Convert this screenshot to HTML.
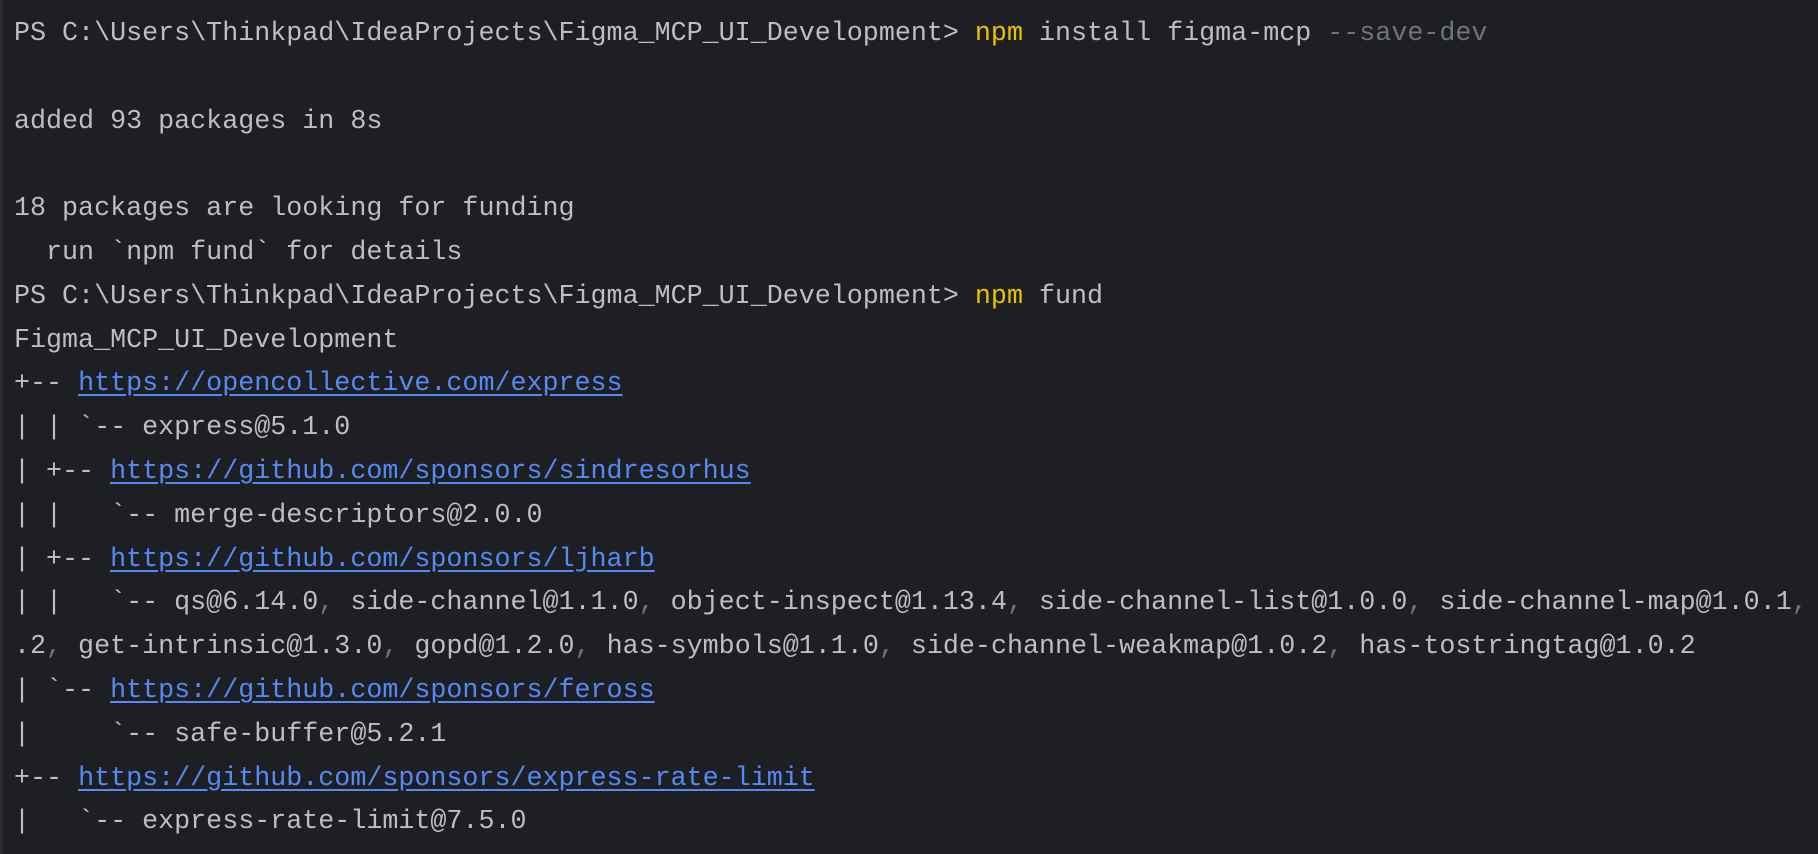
<!DOCTYPE html>
<html><head><meta charset="utf-8"><style>
html,body{margin:0;padding:0;background:#1e1f22;width:1818px;height:854px;overflow:hidden}
body{border-left:3px solid #2b2d30;box-sizing:border-box}
pre{margin:0;padding:13px 0 0 11px;font-family:"Liberation Mono",monospace;font-size:26.7px;line-height:43.8px;color:#bcbec4;white-space:pre;letter-spacing:0}
.y{color:#e8c200}.g{color:#6f737a}.l{color:#548af7;text-decoration:underline;text-underline-offset:4px}
</style></head><body><pre>PS C:\Users\Thinkpad\IdeaProjects\Figma_MCP_UI_Development&gt; <span class="y">npm</span> install figma-mcp <span class="g">--save-dev</span>

added 93 packages in 8s

18 packages are looking for funding
  run `npm fund` for details
PS C:\Users\Thinkpad\IdeaProjects\Figma_MCP_UI_Development&gt; <span class="y">npm</span> fund
Figma_MCP_UI_Development
+-- <span class="l">https://opencollective.com/express</span>
| | `-- express@5.1.0
| +-- <span class="l">https://github.com/sponsors/sindresorhus</span>
| |   `-- merge-descriptors@2.0.0
| +-- <span class="l">https://github.com/sponsors/ljharb</span>
| |   `-- qs@6.14.0<span class="g">,</span> side-channel@1.1.0<span class="g">,</span> object-inspect@1.13.4<span class="g">,</span> side-channel-list@1.0.0<span class="g">,</span> side-channel-map@1.0.1<span class="g">,</span>
.2<span class="g">,</span> get-intrinsic@1.3.0<span class="g">,</span> gopd@1.2.0<span class="g">,</span> has-symbols@1.1.0<span class="g">,</span> side-channel-weakmap@1.0.2<span class="g">,</span> has-tostringtag@1.0.2
| `-- <span class="l">https://github.com/sponsors/feross</span>
|     `-- safe-buffer@5.2.1
+-- <span class="l">https://github.com/sponsors/express-rate-limit</span>
|   `-- express-rate-limit@7.5.0</pre></body></html>
